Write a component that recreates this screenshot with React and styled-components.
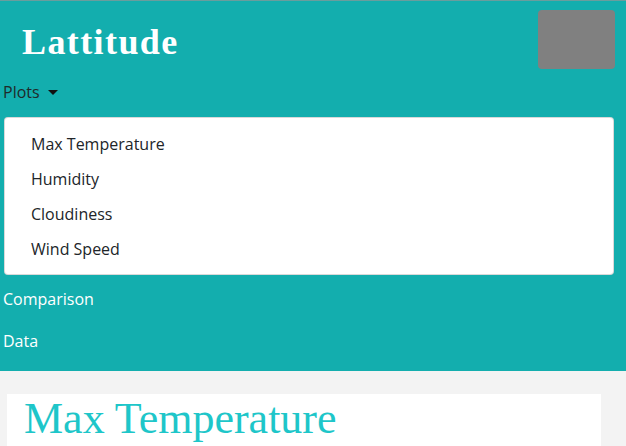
import React from "react";
import styled, { createGlobalStyle } from "styled-components";

const Global = createGlobalStyle`
  html, body { margin: 0; padding: 0; background: #f3f3f3; }
  body { font-family: "Open Sans", "Noto Sans", sans-serif; }
  * { box-sizing: border-box; }
`;

const Header = styled.header`
  background: #13aeae;
  border-top: 1px solid #6a9d9d;
  padding-bottom: 9px;
`;

const Brand = styled.div`
  display: flex;
  justify-content: space-between;
  align-items: flex-start;
  padding: 9px 11px 2px 22px;
`;

const Title = styled.h1`
  margin: 17px 0 0;
  font-family: "Liberation Serif", "Times New Roman", serif;
  font-weight: 700;
  font-size: 36px;
  letter-spacing: 1.4px;
  line-height: 30px;
  color: #ffffff;
`;

const Avatar = styled.div`
  width: 77px;
  height: 59px;
  background: #808080;
  border-radius: 4px;
`;

const Nav = styled.nav`
  display: flex;
  flex-direction: column;
`;

const NavLink = styled.a`
  display: flex;
  align-items: center;
  gap: 8px;
  padding: 9px 3px;
  height: 42px;
  font-size: 16px;
  line-height: 24px;
  color: ${(p) => (p.$dark ? "#1f2a2a" : "#ffffff")};
  text-decoration: none;
`;

const Caret = styled.span`
  width: 0;
  height: 0;
  border-left: 5px solid transparent;
  border-right: 5px solid transparent;
  border-top: 5px solid #111;
  margin-top: 1px;
`;

const Menu = styled.ul`
  list-style: none;
  margin: 4px 12px 3px 4px;
  padding: 9px 0 7px;
  background: #ffffff;
  border: 1px solid rgba(0, 0, 0, 0.15);
  border-radius: 4px;
`;

const MenuItem = styled.li`
  padding: 0 26px;
  height: 35px;
  line-height: 35px;
  font-size: 16px;
  color: #212529;
`;

const Main = styled.main`
  padding: 23px 25px 0 7px;
`;

const Card = styled.section`
  background: #ffffff;
  padding: 0 17px 10px;
`;

const CardTitle = styled.h2`
  margin: 0;
  font-family: "Liberation Serif", "Times New Roman", serif;
  font-weight: 400;
  font-size: 44px;
  line-height: 50px;
  color: #1ec6c9;
`;

const plots = ["Max Temperature", "Humidity", "Cloudiness", "Wind Speed"];

export default function App() {
  return (
    <>
      <Global />
      <Header>
        <Brand>
          <Title>Lattitude</Title>
          <Avatar />
        </Brand>
        <Nav>
          <NavLink $dark href="#">
            Plots <Caret />
          </NavLink>
          <Menu>
            {plots.map((p) => (
              <MenuItem key={p}>{p}</MenuItem>
            ))}
          </Menu>
          <NavLink href="#">Comparison</NavLink>
          <NavLink href="#">Data</NavLink>
        </Nav>
      </Header>
      <Main>
        <Card>
          <CardTitle>Max Temperature</CardTitle>
        </Card>
      </Main>
    </>
  );
}
